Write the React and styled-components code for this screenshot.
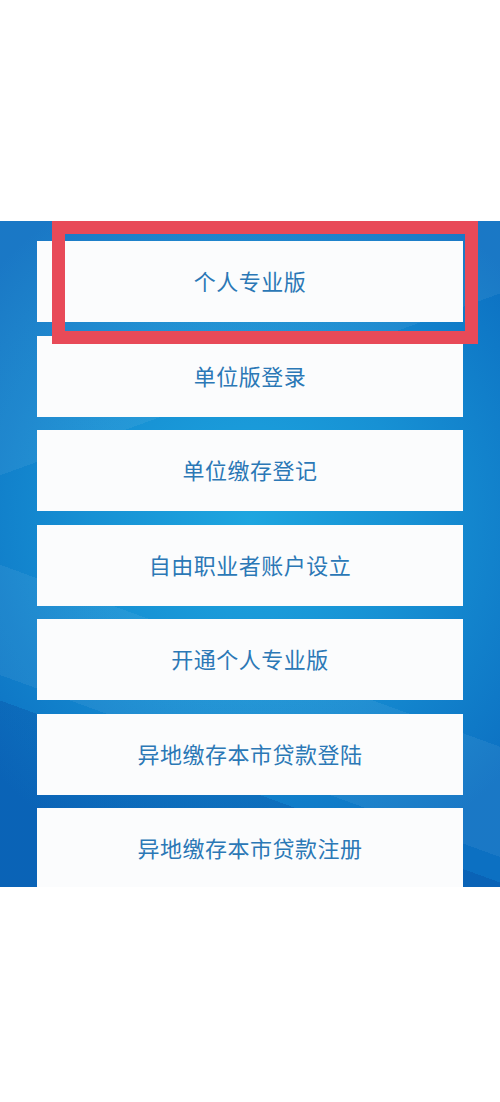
import React from 'react';
import styled, { createGlobalStyle } from 'styled-components';

const GlobalStyle = createGlobalStyle`
  html, body {
    margin: 0;
    padding: 0;
    background: #ffffff;
    font-family: "Noto Sans CJK SC", "Noto Sans", sans-serif;
  }
`;

const Page = styled.div`
  width: 500px;
  height: 1102px;
  background: #ffffff;
  display: flex;
  flex-direction: column;
`;

const TopSpace = styled.div`
  height: 221px;
  flex-shrink: 0;
`;

const BluePanel = styled.div`
  position: relative;
  height: 666px;
  flex-shrink: 0;
  overflow: hidden;
  padding: 20px 37px 0;
  box-sizing: border-box;
  display: flex;
  flex-direction: column;
  gap: 13.5px;
  background:
    linear-gradient(160deg, rgba(255, 255, 255, 0.06) 0 30%, transparent 30%),
    linear-gradient(200deg, transparent 0 62%, rgba(255, 255, 255, 0.06) 62% 75%, transparent 75%),
    linear-gradient(20deg, rgba(0, 40, 130, 0.18) 0 22%, transparent 22%),
    radial-gradient(ellipse 70% 55% at 50% 45%, #1ea6e0 0%, #1791d4 45%, #0c70c2 100%);
`;

const Facet = styled.div`
  position: absolute;
  pointer-events: none;
  width: 0;
  height: 0;
  border-left: ${(p) => p.w}px solid transparent;
  border-right: ${(p) => p.w}px solid transparent;
  border-bottom: ${(p) => p.h}px solid rgba(255, 255, 255, 0.08);
  left: ${(p) => p.x}px;
  top: ${(p) => p.y}px;
`;

const MenuButton = styled.div`
  position: relative;
  flex-shrink: 0;
  height: 81px;
  box-sizing: border-box;
  padding-bottom: 3px;
  background: #fbfcfd;
  display: flex;
  align-items: center;
  justify-content: center;
  color: #2b78b6;
  font-size: 22px;
  letter-spacing: 0.5px;
`;

const Highlight = styled.div`
  position: absolute;
  left: 15px;
  top: -20px;
  width: 426px;
  height: 123px;
  box-sizing: border-box;
  border: 13px solid #e84a58;
  pointer-events: none;
  z-index: 5;
`;

const items = [
  '个人专业版',
  '单位版登录',
  '单位缴存登记',
  '自由职业者账户设立',
  '开通个人专业版',
  '异地缴存本市贷款登陆',
  '异地缴存本市贷款注册',
];

export default function App() {
  return (
    <Page>
      <GlobalStyle />
      <TopSpace />
      <BluePanel>
        <Facet x={60} y={590} w={90} h={80} />
        <Facet x={250} y={590} w={60} h={60} />
        {items.map((label, i) => (
          <MenuButton key={label}>
            {label}
            {i === 0 && <Highlight />}
          </MenuButton>
        ))}
      </BluePanel>
    </Page>
  );
}
